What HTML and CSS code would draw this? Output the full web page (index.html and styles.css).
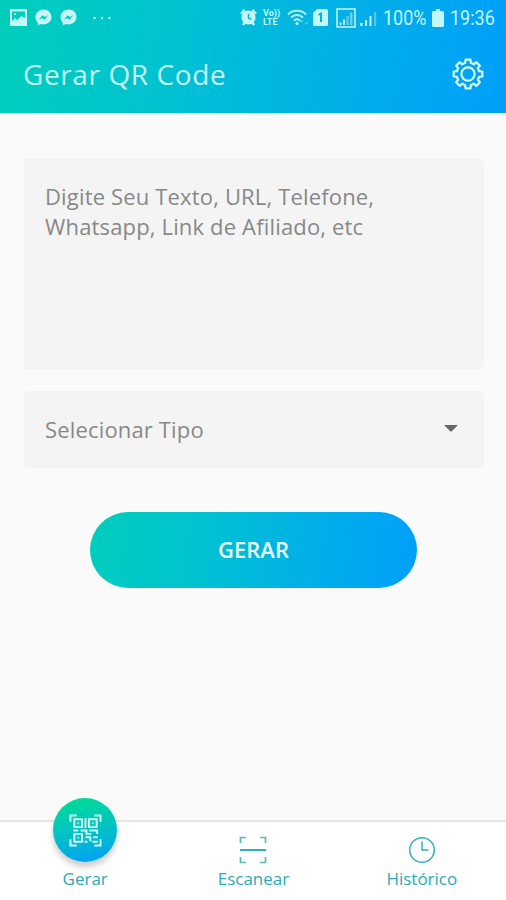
FILE: index.html
```html
<!DOCTYPE html>
<html lang="pt-BR">
<head>
    <meta charset="UTF-8">
    <meta name="viewport" content="width=device-width, initial-scale=1.0">
    <title>Gerar QR Code</title>
    <link rel="stylesheet" href="styles.css">
</head>
<body>
    <div class="app">
        <header class="header">
            <div class="status-bar">
                <div class="status-group">
                    <svg width="17" height="17" viewBox="0 0 17 17">
                        <path fill="currentColor" fill-rule="evenodd" d="M0 0h17v17H0zM2 2.500V12l3-3 2 2 4.500-4L15 9V2.500zM4 4h2v2H4z"/>
                    </svg>
                    <svg width="17" height="17" viewBox="0 0 18 18">
                        <path fill="currentColor" fill-rule="evenodd" d="M9 .5C4 .5.500 4 .500 8.500c0 2.500 1 4.500 2.500 6v3l3-1.500c6 1.500 11.500-2 11.500-7.500C17.500 4 14 .5 9 .5zM4 11.500l4-5 2.500 2L14 6.500l-4 5-2.500-2z"/>
                    </svg>
                    <svg width="17" height="17" viewBox="0 0 18 18">
                        <path fill="currentColor" fill-rule="evenodd" d="M9 .5C4 .5.500 4 .500 8.500c0 2.500 1 4.500 2.500 6v3l3-1.500c6 1.500 11.500-2 11.500-7.500C17.500 4 14 .5 9 .5zM4 11.500l4-5 2.500 2L14 6.500l-4 5-2.500-2z"/>
                    </svg>
                    <svg class="dots" width="18" height="4" viewBox="0 0 18 4">
                        <g fill="currentColor">
                            <circle cx="1.500" cy="2" r="1.200"/>
                            <circle cx="9" cy="2" r="1.200"/>
                            <circle cx="16.500" cy="2" r="1.200"/>
                        </g>
                    </svg>
                </div>
                <div class="status-group status-right">
                    <svg width="17" height="17" viewBox="0 0 18 18">
                        <circle cx="9" cy="9" r="7.500" fill="currentColor"/>
                        <path d="M1 5l4-4M17 5l-4-4M3 17l2.500-3M15 17l-2.500-3" stroke="currentColor" stroke-width="2.500"/>
                        <path d="M9 5v4.500l3 1.500" fill="none" stroke="#00b8da" stroke-width="1.500"/>
                    </svg>
                    <div class="volte"><span>Vo))</span><span>LTE</span></div>
                    <svg class="wifi" width="22" height="17" viewBox="0 0 22 17">
                        <g fill="none" stroke="currentColor" stroke-width="1.900">
                            <path d="M1 5.500C6 .3 14 .3 19 5.500"/>
                            <path d="M4 8.700c3.500-3.600 8.500-3.600 12 0"/>
                            <path d="M7 11.700c2-2 4-2 6 0"/>
                        </g>
                        <circle cx="10" cy="14.500" r="1.600" fill="currentColor"/>
                        <path d="M14.500 10.500l-2 2.500h4zM19.500 16l-2-2.500h4z" fill="currentColor" opacity=".45"/>
                    </svg>
                    <svg class="sim" width="15" height="17" viewBox="0 0 15 17">
                        <path fill="currentColor" d="M4 0h9.500q1.500 0 1.500 1.500v14q0 1.500-1.500 1.500h-12Q0 17 0 15.500V4z"/>
                        <path d="M5.500 6L8 4.500V13" fill="none" stroke="#00b2e6" stroke-width="2"/>
                    </svg>
                    <svg class="signal-box" width="20" height="20" viewBox="0 0 20 20">
                        <path d="M1 1h18v18H1z" fill="none" stroke="currentColor" stroke-width="1.500"/>
                        <g fill="currentColor">
                            <path d="M3.500 14.500h2V17h-2zM7 11.500h2V17H7z"/>
                            <path d="M10.500 8h2v9h-2zM14 4.500h2.500V17H14z" opacity=".5"/>
                        </g>
                    </svg>
                    <svg class="signal" width="17" height="18" viewBox="0 0 17 18">
                        <g fill="currentColor">
                            <path d="M0 14h2.500v3H0zM5 11h2v6H5zM9.500 7h2v10h-2z"/>
                            <path d="M14 3h2.200v14H14z" opacity=".4"/>
                        </g>
                    </svg>
                    <span class="battery-level">100%</span>
                    <svg class="battery" width="12" height="18" viewBox="0 0 12 18">
                        <path fill="currentColor" d="M4 0h4v2h2.500Q12 2 12 3.500v13q0 1.500-1.500 1.500h-9Q0 18 0 16.500v-13Q0 2 1.500 2H4z"/>
                    </svg>
                    <span class="clock">19:36</span>
                </div>
            </div>
            <div class="title-bar">
                <h1 class="title">Gerar QR Code</h1>
                <svg class="settings" width="32" height="32" viewBox="-16 -16 32 32">
                    <g fill="none" stroke="currentColor" stroke-width="2.200" stroke-linejoin="round">
                        <path d="M-2.800-11L-2.500-14.300H2.500L2.800-11Q4.500-10.700 5.820-9.680L8.300-11.900 11.900-8.300 9.680-5.820Q10.700-4.500 11-2.800L14.300-2.500V2.500L11 2.800Q10.700 4.500 9.680 5.820L11.900 8.300 8.300 11.900 5.820 9.680Q4.500 10.700 2.800 11L2.500 14.300H-2.500L-2.800 11Q-4.500 10.700-5.820 9.680L-8.300 11.900-11.900 8.300-9.680 5.820Q-10.700 4.500-11 2.800L-14.300 2.500V-2.500L-11-2.800Q-10.700-4.500-9.680-5.820L-11.900-8.300-8.300-11.900-5.820-9.680Q-4.500-10.700-2.800-11z"/>
                        <circle r="6.600"/>
                    </g>
                </svg>
            </div>
        </header>

        <main class="content">
            <div class="text-field">Digite Seu Texto, URL, Telefone, Whatsapp, Link de Afiliado, etc</div>
            <div class="select-field">
                <span>Selecionar Tipo</span>
                <svg width="14" height="7" viewBox="0 0 14 7">
                    <path fill="#666" d="M0 0h14L7 7z"/>
                </svg>
            </div>
            <button class="generate-button">GERAR</button>
        </main>

        <nav class="bottom-nav">
            <a class="nav-item">
                <span class="nav-active">
                    <svg width="33" height="33" viewBox="0 0 34 34">
                        <g fill="none" stroke="#d0fff8" stroke-width="2">
                            <path d="M1.500 8V1.500H8M26 1.500h6.500V8M32.500 26v6.500H26M8 32.500H1.500V26"/>
                            <path d="M5.500 5.500h8v8h-8zM20.500 5.500h8v8h-8zM5.500 20.500h8v8h-8z"/>
                            <path d="M17 4.500v10M4.500 17h5M12 17h6v3.500h5M21 17h8v3.500M17 24h5v4M25 24h4.500M16 28.500h3M24 28.500h5.500"/>
                        </g>
                        <path fill="#d0fff8" opacity=".7" d="M8.500 8.500h2v2h-2zM23.500 8.500h2v2h-2zM8.500 23.500h2v2h-2z"/>
                    </svg>
                </span>
                <span>Gerar</span>
            </a>
            <a class="nav-item">
                <svg width="28" height="28" viewBox="0 0 28 28">
                    <g fill="none" stroke="#35afba" stroke-width="1.700">
                        <path d="M1.500 7V1.500H7M21 1.500h5.500V7M26.500 21v5.500H21M7 26.500H1.500V21" stroke="#58bdb8"/>
                        <path d="M1 14h26" stroke-width="2"/>
                    </g>
                </svg>
                <span>Escanear</span>
            </a>
            <a class="nav-item">
                <svg width="28" height="28" viewBox="0 0 28 28">
                    <g fill="none" stroke="#35afba" stroke-width="1.500">
                        <circle cx="14" cy="14" r="12.300"/>
                        <path d="M14 5.500V14h6.500"/>
                    </g>
                </svg>
                <span>Histórico</span>
            </a>
        </nav>
    </div>
</body>
</html>
```
FILE: styles.css
```css
* {
    box-sizing: border-box;
}

body {
    margin: 0;
    font-family: "Open Sans", sans-serif;
    background: #fafafa;
}

svg {
    display: block;
    flex-shrink: 0;
}

.app {
    height: 900px;
    display: flex;
    flex-direction: column;
}

.header {
    height: 113px;
    background: linear-gradient(98deg, #00cebb, #00c3d0 32%, #00b1e6 65%, #009ffb);
    color: #c4f6fa;
}

.status-bar {
    height: 35px;
    padding: 0 10px;
    display: flex;
    align-items: center;
    justify-content: space-between;
}

.status-group {
    display: flex;
    align-items: center;
    gap: 8px;
}

.dots {
    margin-left: 8px;
}

.status-right {
    gap: 6px;
    font-family: Roboto, sans-serif;
    font-size: 20px;
}

.volte {
    width: 18px;
    display: flex;
    flex-direction: column;
    font-size: 9px;
    font-weight: 700;
    line-height: 9px;
}

.sim {
    margin-left: -2px;
}

.signal-box {
    margin-left: 2px;
}

.signal {
    margin-left: -2px;
}

.battery-level,
.clock {
    transform: scaleX(0.9);
    transform-origin: left;
    white-space: nowrap;
}

.battery-level {
    width: 43px;
}

.clock {
    width: 46px;
}

.title-bar {
    height: 77px;
    padding: 0 22px 0 23px;
    display: flex;
    align-items: center;
    justify-content: space-between;
}

.title {
    margin: 0;
    font-size: 28px;
    font-weight: 400;
    letter-spacing: 0.6px;
}

.settings {
    color: #d6fbff;
}

.content {
    flex: 1;
    padding: 45px 22px 0 24px;
    display: flex;
    flex-direction: column;
}

.text-field,
.select-field {
    background: #f4f4f4;
    border-radius: 5px;
    color: #888;
    font-size: 22px;
    line-height: 30px;
    letter-spacing: 0.16px;
}

.text-field {
    height: 212px;
    padding: 23px 80px 0 21px;
}

.select-field {
    height: 77px;
    margin-top: 21px;
    padding: 0 26px 2px 21px;
    display: flex;
    align-items: center;
    justify-content: space-between;
}

.generate-button {
    width: 327px;
    height: 76px;
    margin: 44px auto 0 66px;
    padding: 0 0 2px;
    border: none;
    border-radius: 38px;
    background: linear-gradient(98deg, #00cebb, #00c3d0 32%, #00b1e6 65%, #009ffb);
    color: #e6fbff;
    font-family: inherit;
    font-size: 22px;
    font-weight: 600;
}

.bottom-nav {
    height: 80px;
    padding-left: 1px;
    background: #fff;
    border-top: 2px solid #e6e6e6;
    display: flex;
}

.nav-item {
    flex: 1;
    padding-bottom: 9px;
    display: flex;
    flex-direction: column;
    align-items: center;
    justify-content: flex-end;
    gap: 3px;
    color: #2aabb5;
    font-size: 17px;
    line-height: 24px;
}

/* raised circle, sits above the top edge of the bar */
.nav-active {
    width: 64px;
    height: 64px;
    margin-bottom: 2px;
    flex-shrink: 0;
    border-radius: 50%;
    background: linear-gradient(170deg, #00dc96 5%, #00c0c8 55%, #00a2f5 95%);
    box-shadow: 0 5px 6px rgba(0, 0, 0, 0.2);
    display: flex;
    align-items: center;
    justify-content: center;
}
```
